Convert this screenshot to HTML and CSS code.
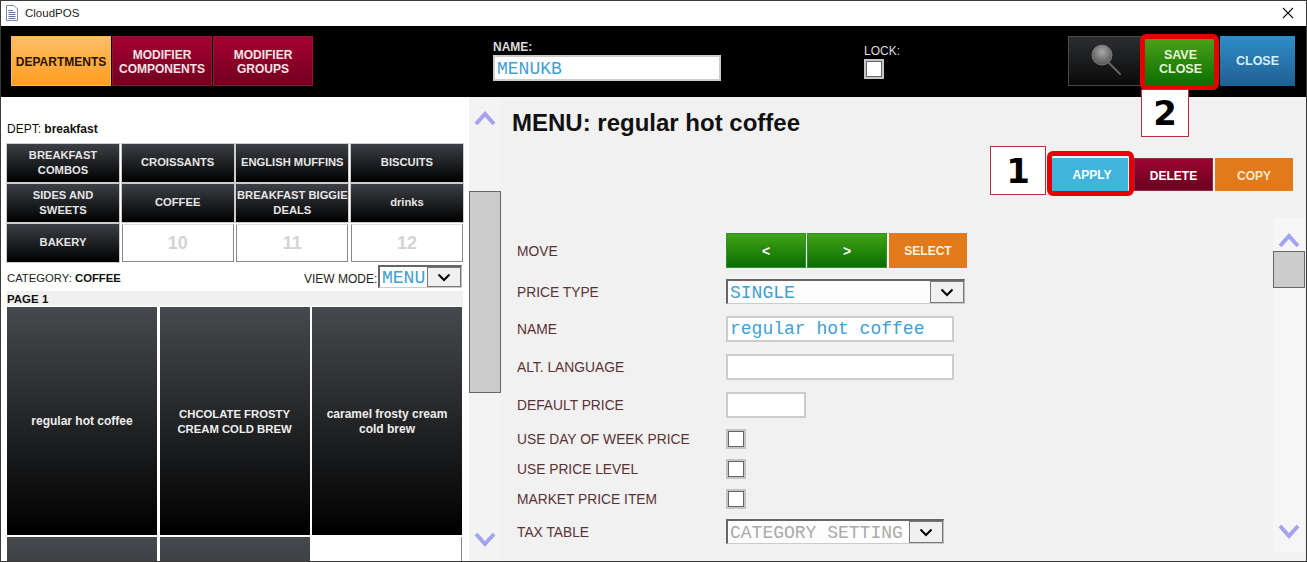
FILE: index.html
```html
<!DOCTYPE html>
<html lang="en">

<head>
    <meta charset="UTF-8">
    <meta name="viewport" content="width=device-width, initial-scale=1.0">
    <title>CloudPOS</title>
    <link rel="stylesheet" href="styles.css">
</head>

<body>
    <div class="window">
        <div class="titlebar">
            <svg class="doc-icon" width="14" height="17" viewBox="0 0 14 17">
                <path d="M1.5 .5H9L12.5 4V15.5H1.5Z" fill="#fff" stroke="#7b8a9c" />
                <path d="M3.5 5.5H8M3.5 7.5H10.5M3.5 9.5H10.5M3.5 11.5H10.5M3.5 13.5H10.5" stroke="#5c7390" />
            </svg>
            <span class="app-name">CloudPOS</span>
            <svg class="x-icon" width="12" height="12" viewBox="0 0 12 12">
                <path d="M1 1L11 11M11 1L1 11" stroke="#111" stroke-width="1.1" fill="none" />
            </svg>
        </div>

        <div class="toolbar">
            <div class="tabs">
                <a class="btn tab-orange">DEPARTMENTS</a>
                <a class="btn tab-red">MODIFIER<br>COMPONENTS</a>
                <a class="btn tab-red">MODIFIER<br>GROUPS</a>
            </div>
            <div class="name-box">
                <div class="name-label">NAME:</div>
                <div class="field name-field">MENUKB</div>
            </div>
            <div class="lock-box">
                <div class="lock-label">LOCK:</div>
                <div class="check lock-check"></div>
            </div>
            <div class="tool-buttons">
                <a class="btn search-btn">
                    <svg width="34" height="36" viewBox="0 0 34 36">
                        <defs>
                            <radialGradient id="lens" cx="50%" cy="35%" r="65%">
                                <stop offset="0" stop-color="#a8a8a8" />
                                <stop offset="1" stop-color="#555" />
                            </radialGradient>
                        </defs>
                        <path d="M19 20L30 31" stroke="#666" stroke-width="2" stroke-linecap="round" />
                        <circle cx="12" cy="12" r="10" fill="url(#lens)" stroke="#777" />
                    </svg>
                </a>
                <a class="btn save-btn">SAVE<br>CLOSE</a>
                <a class="btn close-btn">CLOSE</a>
            </div>
        </div>

        <div class="main">
            <div class="left">
                <div class="dept-line">DEPT: <b>breakfast</b></div>
                <div class="dept-grid">
                    <a class="btn dark">BREAKFAST<br>COMBOS</a>
                    <a class="btn dark">CROISSANTS</a>
                    <a class="btn dark">ENGLISH MUFFINS</a>
                    <a class="btn dark">BISCUITS</a>
                    <a class="btn dark">SIDES AND<br>SWEETS</a>
                    <a class="btn dark">COFFEE</a>
                    <a class="btn dark">BREAKFAST BIGGIE<br>DEALS</a>
                    <a class="btn dark">drinks</a>
                    <a class="btn dark">BAKERY</a>
                    <a class="btn empty">10</a>
                    <a class="btn empty">11</a>
                    <a class="btn empty">12</a>
                </div>
                <div class="cat-line">
                    <div class="cat-name">CATEGORY: <b>COFFEE</b></div>
                    <div class="view-mode">VIEW MODE:</div>
                    <div class="select view-select">
                        <span class="select-text">MENU</span>
                        <span class="select-arrow">
                            <svg width="14" height="9" viewBox="0 0 14 9"><path d="M1.5 1.5L7 7L12.5 1.5" stroke="#000" stroke-width="2" fill="none" /></svg>
                        </span>
                    </div>
                </div>
                <div class="page-label">PAGE 1</div>
                <div class="menu-grid">
                    <a class="btn tile">regular hot coffee</a>
                    <a class="btn tile tile-caps">CHCOLATE FROSTY<br>CREAM COLD BREW</a>
                    <a class="btn tile">caramel frosty cream<br>cold brew</a>
                    <a class="btn tile"></a>
                    <a class="btn tile"></a>
                    <a class="btn tile-empty"></a>
                </div>
            </div>

            <div class="list-scroll">
                <svg class="arrow" width="22" height="16" viewBox="0 0 22 16"><path d="M2 14L11 4L20 14" stroke="#a3a3ee" stroke-width="4" fill="none" /></svg>
                <div class="list-thumb"></div>
                <svg class="arrow list-down" width="22" height="16" viewBox="0 0 22 16"><path d="M2 2L11 12L20 2" stroke="#a3a3ee" stroke-width="4" fill="none" /></svg>
            </div>

            <div class="right">
                <h1 class="item-title">MENU: regular hot coffee</h1>
                <div class="actions">
                    <a class="btn apply-btn">APPLY</a>
                    <a class="btn delete-btn">DELETE</a>
                    <a class="btn copy-btn">COPY</a>
                </div>
                <div class="form-wrap">
                    <div class="form">
                        <div class="row">
                            <div class="label label-low">MOVE</div>
                            <a class="btn move-btn">&lt;</a>
                            <a class="btn move-btn">&gt;</a>
                            <a class="btn select-btn">SELECT</a>
                        </div>
                        <div class="row row-field">
                            <div class="label label-low">PRICE TYPE</div>
                            <div class="select price-select">
                                <span class="select-text">SINGLE</span>
                                <span class="select-arrow">
                                    <svg width="14" height="9" viewBox="0 0 14 9"><path d="M1.5 1.5L7 7L12.5 1.5" stroke="#000" stroke-width="2" fill="none" /></svg>
                                </span>
                            </div>
                        </div>
                        <div class="row row-field row-wide">
                            <div class="label">NAME</div>
                            <div class="field long-field">regular hot coffee</div>
                        </div>
                        <div class="row row-field row-wide">
                            <div class="label">ALT. LANGUAGE</div>
                            <div class="field long-field"></div>
                        </div>
                        <div class="row row-field row-wide">
                            <div class="label">DEFAULT PRICE</div>
                            <div class="field short-field"></div>
                        </div>
                        <div class="row row-check">
                            <div class="label">USE DAY OF WEEK PRICE</div>
                            <div class="check"></div>
                        </div>
                        <div class="row row-check">
                            <div class="label">USE PRICE LEVEL</div>
                            <div class="check"></div>
                        </div>
                        <div class="row row-check">
                            <div class="label">MARKET PRICE ITEM</div>
                            <div class="check"></div>
                        </div>
                        <div class="row row-field">
                            <div class="label label-low">TAX TABLE</div>
                            <div class="select tax-select">
                                <span class="select-text grey-text">CATEGORY SETTING</span>
                                <span class="select-arrow">
                                    <svg width="14" height="9" viewBox="0 0 14 9"><path d="M1.5 1.5L7 7L12.5 1.5" stroke="#000" stroke-width="2" fill="none" /></svg>
                                </span>
                            </div>
                        </div>
                    </div>
                    <div class="form-scroll">
                        <svg class="arrow" width="22" height="16" viewBox="0 0 22 16"><path d="M2 14L11 4L20 14" stroke="#a3a3ee" stroke-width="4" fill="none" /></svg>
                        <div class="form-thumb"></div>
                        <svg class="arrow form-down" width="22" height="16" viewBox="0 0 22 16"><path d="M2 2L11 12L20 2" stroke="#a3a3ee" stroke-width="4" fill="none" /></svg>
                    </div>
                </div>
            </div>
        </div>

        <!-- red marks drawn over the screen -->
        <div class="mark mark-save"></div>
        <div class="mark mark-apply"></div>
        <div class="step step-1">1</div>
        <div class="step step-2">2</div>
    </div>
</body>

</html>
```

FILE: styles.css
```css
* {
    box-sizing: border-box;
}

html,
body {
    margin: 0px;
    padding: 0px;
    overflow: hidden;
}

body {
    font-family: "Liberation Sans", Arial, sans-serif;
    background: #fff;
}

.window {
    position: relative;
    display: flex;
    flex-direction: column;
    width: 1307px;
    height: 562px;
    border: 1px solid #3a3a3a;
    background: #fff;
    overflow: hidden;
}

.titlebar {
    display: flex;
    align-items: center;
    flex: none;
    height: 25px;
    padding: 0px 12px 1px 4px;
    background: #fff;
}

.app-name {
    margin-left: 6px;
    font-size: 11.5px;
    color: #222;
}

.x-icon {
    margin-left: auto;
}

.btn {
    display: flex;
    align-items: center;
    justify-content: center;
    text-align: center;
    font-weight: bold;
    color: #fff;
}

.toolbar {
    display: flex;
    flex: none;
    height: 71px;
    padding: 10px 10px 0px 10px;
    background: #000;
}

.tabs {
    display: flex;
    gap: 1px;
    width: 302px;
    height: 50px;
}

.tabs .btn {
    width: 100px;
    padding-top: 1px;
    font-size: 12px;
    line-height: 14px;
}

.tab-orange {
    background: linear-gradient(#ffbe67, #ff9d1f);
    border: 1px solid #ffb55a;
}

.tabs .tab-orange {
    color: #2b1200;
}

.tab-red {
    background: linear-gradient(#a5002f, #720020);
    border: 1px solid #8c1733;
    color: #f6e3e6;
}

.name-box {
    width: 371px;
    margin-left: 180px;
    color: #ddd;
    font-size: 12px;
}

.name-label {
    margin-top: 5px;
    font-weight: bold;
    line-height: 12px;
}

.field {
    height: 26px;
    padding-left: 2px;
    border: 2px solid #ccc;
    background: #fff;
    font-family: "Liberation Mono", "Courier New", monospace;
    font-size: 18px;
    line-height: 22px;
    color: #3f9fd2;
}

.name-field {
    width: 228px;
    margin-top: 2px;
    line-height: 25px;
}

.lock-box {
    width: 204px;
    color: #ddd;
    font-size: 12px;
}

.lock-label {
    margin-top: 9px;
    line-height: 12px;
}

.check {
    width: 20px;
    height: 20px;
    border: 2px solid #c4c4c4;
    outline: 1px solid #666;
    outline-offset: -3px;
    background: #fff;
}

.lock-check {
    margin-top: 2px;
}

.tool-buttons {
    display: flex;
    height: 50px;
}

.search-btn {
    width: 77px;
    background: linear-gradient(#2b2d30, #0a0a0a);
    border: 1px solid #4a4a4a;
}

.save-btn {
    width: 71px;
    padding-top: 1px;
    background: linear-gradient(#4ea31a, #0a6e00);
    font-size: 12.5px;
    line-height: 14px;
    color: #e7f3d8;
}

.close-btn {
    width: 75px;
    margin-left: 4px;
    background: linear-gradient(#2f8ec8, #1f5f94);
    font-size: 12.5px;
    color: #d8eefa;
}

.main {
    display: flex;
    flex: 1;
    min-height: 0;
}

.left {
    flex: none;
    width: 468px;
    padding: 25px 6px 0px 6px;
}

.dept-line {
    font-size: 12px;
    line-height: 14px;
    color: #111;
}

.dept-grid {
    display: grid;
    grid-template-columns: repeat(4, 112px);
    grid-auto-rows: 38px;
    justify-content: space-between;
    row-gap: 2px;
    margin-top: 8px;
}

.dark {
    padding-bottom: 1px;
    background: linear-gradient(#3c4045, #000);
    font-size: 11.2px;
    line-height: 15px;
    color: #e6e6e6;
    box-shadow: 0px 0px 0px 1px #ccc;
}

.empty {
    padding-top: 1px;
    border: 1px solid #8a8a8a;
    border-top-color: #ddd;
    background: #fff;
    font-size: 18px;
    color: #d4d4d4;
}

.cat-line {
    display: flex;
    align-items: center;
    height: 29px;
}

.cat-name {
    width: 297px;
    padding-top: 2px;
    font-size: 11.3px;
    color: #222;
}

.cat-name b {
    color: #111;
}

.view-mode {
    width: 74px;
    padding-top: 5px;
    font-size: 12px;
    white-space: nowrap;
    color: #222;
}

.select {
    display: flex;
    height: 25px;
    border: 2px solid #666;
    border-right: 1px solid #bbb;
    border-bottom: 1px solid #ccc;
    background: #fdfdfd;
    font-family: "Liberation Mono", "Courier New", monospace;
    font-size: 18px;
    line-height: 24px;
    color: #3f9fd2;
}

.select-text {
    flex: 1;
    padding-left: 2px;
    white-space: nowrap;
    overflow: hidden;
}

.grey-text {
    color: #aaa;
}

.select-arrow {
    display: flex;
    align-items: center;
    justify-content: center;
    flex: none;
    width: 34px;
    border: 1px solid #777;
    background: #f0f0f0;
}

.view-select {
    width: 84px;
    height: 23px;
    line-height: 22px;
}

.page-label {
    height: 15px;
    background: #f0f0f0;
    font-size: 11.5px;
    font-weight: bold;
    line-height: 17px;
    color: #111;
}

.menu-grid {
    display: grid;
    grid-template-columns: 150px 150px 150px;
    grid-auto-rows: 228px;
    column-gap: 2.5px;
    row-gap: 2px;
    margin-top: 1px;
}

.tile {
    padding: 1px 4px 0px 4px;
    background: linear-gradient(#46494d, #000);
    font-size: 12px;
    line-height: 15px;
    color: #eee;
}

.tile-caps {
    font-size: 11.3px;
}

.tile-empty {
    border-right: 1px solid #888;
    background: #fff;
}

.list-scroll {
    display: flex;
    flex-direction: column;
    align-items: center;
    flex: none;
    width: 32px;
    padding-top: 13px;
    background: #f3f3f3;
}

.list-thumb {
    width: 32px;
    height: 202px;
    margin-top: 65px;
    border: 1px solid #666;
    background: #ccc;
}

.list-down {
    margin-top: 139px;
}

.right {
    display: flex;
    flex-direction: column;
    flex: 1;
    min-width: 0;
    background: #f1f1f1;
}

.item-title {
    margin: 12px 0px 0px 11px;
    font-size: 24px;
    line-height: 28px;
    color: #111;
}

.actions {
    display: flex;
    height: 33px;
    margin: 21px 13px 0px 0px;
    justify-content: flex-end;
}

.actions .btn {
    font-size: 12px;
}

.apply-btn {
    width: 76px;
    margin-right: 6px;
    padding-left: 4px;
    background: #40b4dc;
}

.delete-btn {
    width: 79px;
    margin-right: 2px;
    padding-top: 2px;
    background: linear-gradient(#9c0530, #6b001f);
    border: 1px solid #8c2b45;
}

.copy-btn {
    width: 78px;
    padding-top: 2px;
    background: #e07a1b;
    color: #fde7c8;
}

.form-wrap {
    display: flex;
    flex: none;
    height: 334px;
    margin-top: 27px;
}

.form {
    flex: 1;
    padding: 15px 0px 0px 16px;
}

.row {
    display: flex;
    align-items: center;
    height: 35px;
    gap: 1px;
}

.row-field {
    height: 25px;
    margin-top: 11px;
}

.row-wide {
    height: 26px;
    margin-top: 12px;
}

.row-check {
    height: 20px;
    margin-top: 10px;
}

.row-check:nth-child(6) {
    margin-top: 11px;
}

.row-check + .row-field {
    margin-top: 10px;
}

.label {
    width: 208px;
    font-size: 13.8px;
    color: #5a3236;
}

.label-low {
    padding-top: 2px;
}

.move-btn {
    width: 80px;
    height: 35px;
    background: linear-gradient(#43a316, #086d00);
    border: 1px solid #2f8f2a;
    font-size: 14px;
}

.select-btn {
    width: 78px;
    height: 35px;
    margin-left: 1px;
    background: #e07a1b;
    font-size: 12px;
    color: #fdf0dc;
}

.price-select {
    width: 239px;
}

.tax-select {
    width: 218px;
}

.long-field {
    width: 228px;
}

.short-field {
    width: 80px;
}

.form-scroll {
    display: flex;
    flex-direction: column;
    align-items: center;
    flex: none;
    width: 32px;
    margin-right: 1px;
    padding-top: 14px;
    background: #f6f6f6;
}

.form-thumb {
    width: 32px;
    height: 37px;
    margin-top: 3px;
    border: 1px solid #666;
    background: #ccc;
}

.form-down {
    margin-top: 236px;
}

.mark {
    position: absolute;
    border: 5px solid #e60000;
    border-radius: 6px;
}

.mark-save {
    left: 1139px;
    top: 33px;
    width: 79px;
    height: 56px;
}

.mark-apply {
    left: 1046px;
    top: 150px;
    width: 87px;
    height: 45px;
}

.step {
    position: absolute;
    display: flex;
    align-items: center;
    justify-content: center;
    border: 1px solid #b8303c;
    background: #fff;
    font-family: "DejaVu Sans", sans-serif;
    font-size: 34px;
    font-weight: bold;
    color: #000;
}

.step-1 {
    left: 989px;
    top: 145px;
    width: 56px;
    height: 49px;
}

.step-2 {
    left: 1140px;
    top: 88px;
    width: 48px;
    height: 48px;
}
```
